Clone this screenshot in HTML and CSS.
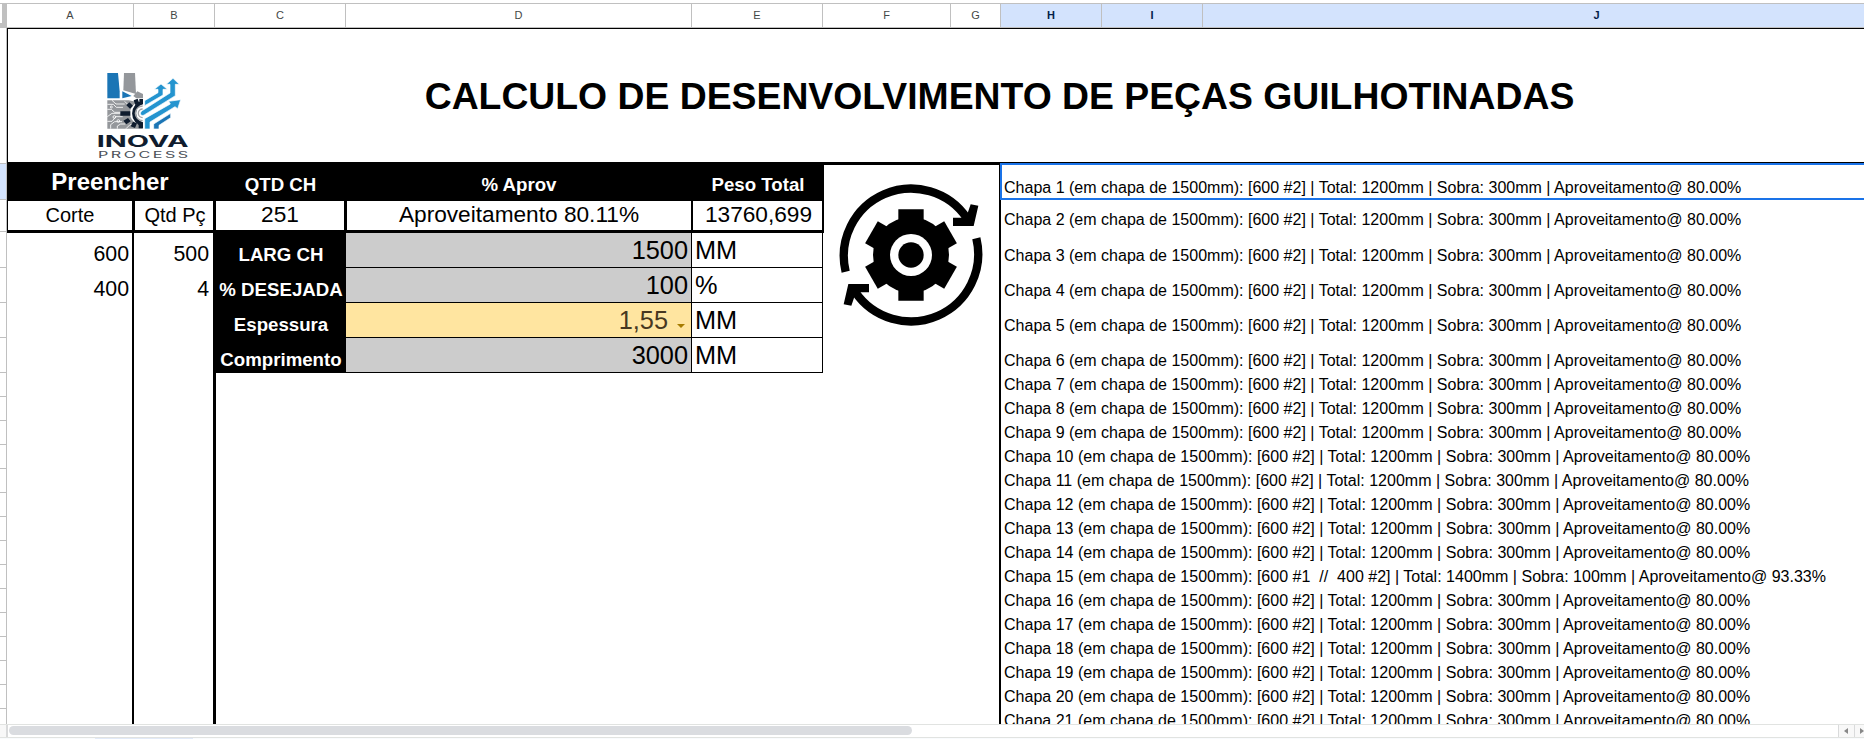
FILE: index.html
```
<!DOCTYPE html>
<html lang="pt-BR">
<head>
<meta charset="utf-8">
<title>Calculo de desenvolvimento</title>
<link rel="stylesheet" href="styles.css">
</head>
<body>
<div class="app">
  <div class="col-heads">
    <div class="corner"></div>
    <div>A</div><div>B</div><div>C</div><div>D</div><div>E</div><div>F</div><div>G</div>
    <div class="sel">H</div><div class="sel">I</div><div class="sel">J</div>
  </div>
  <div class="main">
    <div class="row-heads">
      <i class="r1"></i><i class="r2"></i><i class="r3"></i><i class="r4"></i><i class="r5"></i><i class="r5"></i><i class="r5"></i>
      <i></i><i></i><i></i><i></i><i></i><i></i><i></i><i></i><i></i><i></i><i></i><i></i><i></i><i></i><i></i>
    </div>
    <div class="sheet">
      <div class="banner">
        <svg class="logo" viewBox="0 0 390 330">
          <path fill="#1b75b5" d="M82 39h32l5 55v21H82z"/>
          <path fill="#94979b" d="M132 39h33l3 63-38-11z"/>
          <path fill="#1b75b5" d="M127 94l28 14-28 7z"/>
          <path fill="#94979b" d="M160 108l12-14 17 8v13h-20z"/>
          <path fill="#94979b" d="M82 121h64l42 8v77H82z"/>
          <g fill="none" stroke="#fff" stroke-width="2.5">
            <path d="M82 133h18l9 9h20M82 148h12l10 9h22M96 121l12 11h26M82 170l14-10h26M82 184h14l12-14h20M92 206v-12l12-9h22M112 206v-8l10-6h14M138 206l12-12h12M134 124l8 8"/>
            <circle cx="103" cy="171" r="4"/><circle cx="115" cy="183" r="4"/><circle cx="94" cy="141" r="3"/>
          </g>
          <circle cx="184" cy="160" r="34" fill="#fff"/>
          <g fill="#0f1c2e">
            <path d="M189 122v11a28 28 0 0 0 0 54v12a39 39 0 0 1 0-77z"/>
            <path d="M161 121l12-5 5 14-12 5zM139 136l9-9 11 10-9 9zM121 154h30v13h-30zM130 182l14-8 8 10-13 9zM152 199l7-14 12 5-6 14zM176 190h13v15h-13zM178 117h11v12h-11z"/>
          </g>
          <path fill="none" stroke="#a3a5a8" stroke-width="4" d="M188 138a22 22 0 0 0 0 44M188 147a13 13 0 0 0 0 26"/>
          <g stroke="#fff" stroke-width="2">
            <path fill="#2494cf" d="M194 122l40-24V88h-11l20-16 19 16h-13v17l-55 32z"/>
            <path fill="#2494cf" d="M190 150l80-51V73h-11l20-18 19 18h-12v34l-92 57c-12 8-19-7-4-14z"/>
            <path fill="#2494cf" d="M194 207v-31l77-44-5-8 36-5-9 27-8-6-75 46v21z"/>
            <path fill="#1b75b5" d="M221 207v-15l51-32v13l-35 23v11z"/>
          </g>
          <text class="inova" x="50" y="262" textLength="276" lengthAdjust="spacingAndGlyphs">INOVA</text>
          <text class="process" x="54" y="294" textLength="278" lengthAdjust="spacingAndGlyphs">PROCESS</text>
        </svg>
        <h1>CALCULO DE DESENVOLVIMENTO DE PEÇAS GUILHOTINADAS</h1>
      </div>
      <div class="content">
        <div class="panel">
          <div class="panel-top">
            <div class="fill">Preencher</div><div>QTD CH</div><div>% Aprov</div><div>Peso Total</div>
          </div>
          <div class="panel-sums">
            <div class="lbl">Corte</div><div class="lbl qtd">Qtd Pç</div><div>251</div><div>Aproveitamento 80.11%</div><div>13760,699</div>
          </div>
          <div class="panel-body">
            <div class="cuts"><div>600</div><div>400</div></div>
            <div class="cuts qty"><div>500</div><div>4</div></div>
            <div class="params">
              <div class="name">LARG CH</div><div class="val">1500</div><div class="unit">MM</div>
              <div class="name">% DESEJADA</div><div class="val">100</div><div class="unit">%</div>
              <div class="name">Espessura</div><div class="val pick">1,55<svg class="caret" viewBox="0 0 8 4"><path d="M0 0h8L4 4z"/></svg></div><div class="unit">MM</div>
              <div class="name">Comprimento</div><div class="val">3000</div><div class="unit">MM</div>
            </div>
          </div>
        </div>
        <div class="picture">
          <svg class="gear" viewBox="-216 -216 432 432">
            <g id="turn">
              <path fill="none" stroke="#000" stroke-width="25" d="M-196 50A202 202 0 0 1 168 -110"/>
              <path d="M179-152l23 4-14 61h-62v-25h31l13-14z"/>
            </g>
            <use href="#turn" transform="rotate(180)"/>
            <circle r="114"/>
            <path id="tooth" d="M-38-137h76V137h-76z"/>
            <use href="#tooth" transform="rotate(60)"/>
            <use href="#tooth" transform="rotate(120)"/>
            <circle r="63" fill="#fff"/>
            <circle r="38"/>
          </svg>
        </div>
        <div class="list">
          <div class="active">Chapa 1 (em chapa de 1500mm): [600 #2] | Total: 1200mm | Sobra: 300mm | Aproveitamento@ 80.00%</div>
          <div class="l2">Chapa 2 (em chapa de 1500mm): [600 #2] | Total: 1200mm | Sobra: 300mm | Aproveitamento@ 80.00%</div>
          <div class="l3">Chapa 3 (em chapa de 1500mm): [600 #2] | Total: 1200mm | Sobra: 300mm | Aproveitamento@ 80.00%</div>
          <div class="l4">Chapa 4 (em chapa de 1500mm): [600 #2] | Total: 1200mm | Sobra: 300mm | Aproveitamento@ 80.00%</div>
          <div class="l4">Chapa 5 (em chapa de 1500mm): [600 #2] | Total: 1200mm | Sobra: 300mm | Aproveitamento@ 80.00%</div>
          <div class="l4">Chapa 6 (em chapa de 1500mm): [600 #2] | Total: 1200mm | Sobra: 300mm | Aproveitamento@ 80.00%</div>
          <div>Chapa 7 (em chapa de 1500mm): [600 #2] | Total: 1200mm | Sobra: 300mm | Aproveitamento@ 80.00%</div>
          <div>Chapa 8 (em chapa de 1500mm): [600 #2] | Total: 1200mm | Sobra: 300mm | Aproveitamento@ 80.00%</div>
          <div>Chapa 9 (em chapa de 1500mm): [600 #2] | Total: 1200mm | Sobra: 300mm | Aproveitamento@ 80.00%</div>
          <div>Chapa 10 (em chapa de 1500mm): [600 #2] | Total: 1200mm | Sobra: 300mm | Aproveitamento@ 80.00%</div>
          <div>Chapa 11 (em chapa de 1500mm): [600 #2] | Total: 1200mm | Sobra: 300mm | Aproveitamento@ 80.00%</div>
          <div>Chapa 12 (em chapa de 1500mm): [600 #2] | Total: 1200mm | Sobra: 300mm | Aproveitamento@ 80.00%</div>
          <div>Chapa 13 (em chapa de 1500mm): [600 #2] | Total: 1200mm | Sobra: 300mm | Aproveitamento@ 80.00%</div>
          <div>Chapa 14 (em chapa de 1500mm): [600 #2] | Total: 1200mm | Sobra: 300mm | Aproveitamento@ 80.00%</div>
          <div>Chapa 15 (em chapa de 1500mm): [600 #1  //  400 #2] | Total: 1400mm | Sobra: 100mm | Aproveitamento@ 93.33%</div>
          <div>Chapa 16 (em chapa de 1500mm): [600 #2] | Total: 1200mm | Sobra: 300mm | Aproveitamento@ 80.00%</div>
          <div>Chapa 17 (em chapa de 1500mm): [600 #2] | Total: 1200mm | Sobra: 300mm | Aproveitamento@ 80.00%</div>
          <div>Chapa 18 (em chapa de 1500mm): [600 #2] | Total: 1200mm | Sobra: 300mm | Aproveitamento@ 80.00%</div>
          <div>Chapa 19 (em chapa de 1500mm): [600 #2] | Total: 1200mm | Sobra: 300mm | Aproveitamento@ 80.00%</div>
          <div>Chapa 20 (em chapa de 1500mm): [600 #2] | Total: 1200mm | Sobra: 300mm | Aproveitamento@ 80.00%</div>
          <div>Chapa 21 (em chapa de 1500mm): [600 #2] | Total: 1200mm | Sobra: 300mm | Aproveitamento@ 80.00%</div>
        </div>
      </div>
    </div>
  </div>
  <div class="scroll">
    <div class="scroll-corner"></div>
    <div class="track"><div class="thumb"></div></div>
    <div class="btn"><svg viewBox="0 0 4 6"><path d="M4 0v6L0 3z"/></svg></div>
    <div class="btn"><svg viewBox="0 0 4 6"><path d="M0 0v6l4-3z"/></svg></div>
  </div>
  <div class="tabs"><div class="tab"></div></div>
</div>
</body>
</html>
```
FILE: styles.css
```
* { box-sizing: border-box; }
body {
  margin: 0;
  background: #fff;
  color: #000;
  font-family: "Liberation Sans", Arial, sans-serif;
}
.app {
  width: 1864px;
  height: 739px;
  padding-top: 3px;
  display: flex;
  flex-direction: column;
  overflow: hidden;
}

/* column headings */
.col-heads {
  flex: none;
  display: grid;
  grid-template-columns: 7px 127px 81px 131px 346px 131px 128px 50px 101px 101px 788px;
  height: 25px;
  width: 1864px;
  overflow: hidden;
  border-top: 1px solid #c0c0c0;
  font-size: 11px;
  line-height: 22px;
  text-align: center;
  color: #444746;
}
.col-heads > div { border-right: 1px solid #c0c0c0; border-bottom: 1px solid #c0c0c0; }
.col-heads .sel { background: #d3e3fd; color: #041e49; font-weight: bold; }
.col-heads .corner { border-right: 5px solid #c0c0c0; border-bottom: 5px solid #c0c0c0; }

.main { flex: none; display: flex; height: 696px; overflow: hidden; }
.row-heads { flex: none; width: 7px; border-right: 1px solid #c0c0c0; }
.row-heads i { display: block; height: 24px; border-bottom: 1px solid #c0c0c0; }
.row-heads .r1 { height: 136px; }
.row-heads .r2 { height: 36px; background: #d3e3fd; }
.row-heads .r3 { height: 32px; }
.row-heads .r4 { height: 36px; }
.row-heads .r5 { height: 35px; }

.sheet { width: 1857px; overflow: hidden; }
.banner {
  position: relative;
  width: 1984px;
  height: 134px;
  border-top: 1px solid #000;
  border-left: 1px solid #000;
}
.banner h1 {
  margin: 0;
  padding-top: 46px;
  font-size: 37.33px;
  line-height: 43px;
  text-align: center;
  white-space: nowrap;
}
.logo { position: absolute; left: 72px; top: 31px; width: 130px; height: 110px; }
.inova { font-size: 46px; font-weight: bold; fill: #0f1c2e; font-family: Inter, sans-serif; }
.process { font-size: 26px; letter-spacing: 4px; fill: #4b5058; font-family: Inter, sans-serif; }

.content { display: flex; height: 562px; }
.panel { flex: none; width: 817px; display: flex; flex-direction: column; }
.panel-top {
  display: grid;
  grid-template-columns: 208px 131px 346px 132px;
  height: 39px;
  background: #000;
  color: #fff;
  font-size: 18.67px;
  font-weight: bold;
  line-height: 21px;
  text-align: center;
}
.panel-top > div { padding-top: 12px; }
.panel-top .fill { font-size: 24px; line-height: 27px; padding: 6px 2px 0 0; }
.panel-sums {
  display: grid;
  grid-template-columns: 124px 78px 128px 344px 128px;
  column-gap: 3px;
  height: 32px;
  padding: 0 3px 3px 1px;
  background: #000;
  font-size: 22.67px;
  line-height: 26px;
  text-align: center;
}
.panel-sums > div { background: #fff; white-space: nowrap; }
.panel-sums > div:nth-child(5) { margin-left: -1px; padding-left: 2px; }
.panel-sums .lbl { font-size: 20px; line-height: 28px; }
.panel-sums .qtd { padding-left: 2px; }
.panel-body { flex: 1; display: flex; }
.cuts {
  width: 127px;
  border-right: 2px solid #000;
  padding-right: 3px;
  font-size: 21.33px;
  line-height: 24px;
  text-align: right;
}
.cuts.qty { width: 81px; margin-right: 0; border-right-width: 3px; }
.cuts > div { height: 35px; padding-top: 9px; }
.cuts.qty { width: 82px; padding-right: 4px; }
.params {
  display: grid;
  grid-template-columns: 130px 346px 131px;
  grid-auto-rows: 35px;
  white-space: nowrap;
}
.params > div { border-bottom: 1px solid #000; }
.name {
  background: #000;
  color: #fff;
  font-size: 18.67px;
  font-weight: bold;
  line-height: 21px;
  padding-top: 11px;
  text-align: center;
}
.val, .unit { font-size: 25.33px; line-height: 29px; padding-top: 3px; border-right: 1px solid #000; }
.val { background: #ccc; text-align: right; padding-right: 3px; }
.unit { padding-left: 3px; }
.pick { background: #ffe5a0; color: #473821; padding-right: 6px; }
.caret { width: 8px; height: 4px; margin-left: 9px; vertical-align: 1px; fill: #a67c00; }

.picture {
  flex: none;
  width: 176px;
  border-top: 3px solid #000;
  border-right: 1px solid #000;
  padding: 18px 0 0 15px;
}
.gear { display: block; width: 144px; height: 144px; }

.list { flex: none; width: 992px; border-top: 1px solid #000; font-size: 16px; line-height: 18px; letter-spacing: 0.01px; }
.list > div {
  display: flex;
  align-items: flex-end;
  height: 24px;
  padding: 0 0 3px 3px;
  border-left: 1px solid #000;
  white-space: pre;
}
.list .l2 { height: 32px; }
.list .l3 { height: 36px; }
.list .l4 { height: 35px; }
.list .active { height: 37px; border: 2px solid #1a73e8; padding: 0 0 1px 2px; }

/* bottom scrollbar and the sheet tabs under it */
.scroll { flex: none; display: flex; height: 14px; border-top: 1px solid #e1e3e1; border-bottom: 1px solid #fff; }
.scroll-corner { width: 8px; background: #f8f8f8; border-right: 2px solid #d9dadb; }
.track { flex: 1; padding: 1px 0 0 1px; }
.thumb { width: 903px; height: 9px; border-radius: 5px; background: #dadce0; }
.btn { flex: none; width: 16px; background: #f8f8f8; border-left: 1px solid #d9dadb; display: flex; align-items: center; padding-left: 5px; }
.btn:last-child { width: 10px; }
.btn svg { flex: none; width: 4px; height: 6px; fill: #888; }
.tabs { height: 2px; border-top: 1px solid #e1e3e1; background: #f9fbfd; margin-top: -1px; padding-left: 95px; }
.tab { width: 98px; height: 1px; background: #e1e9f7; }
```
